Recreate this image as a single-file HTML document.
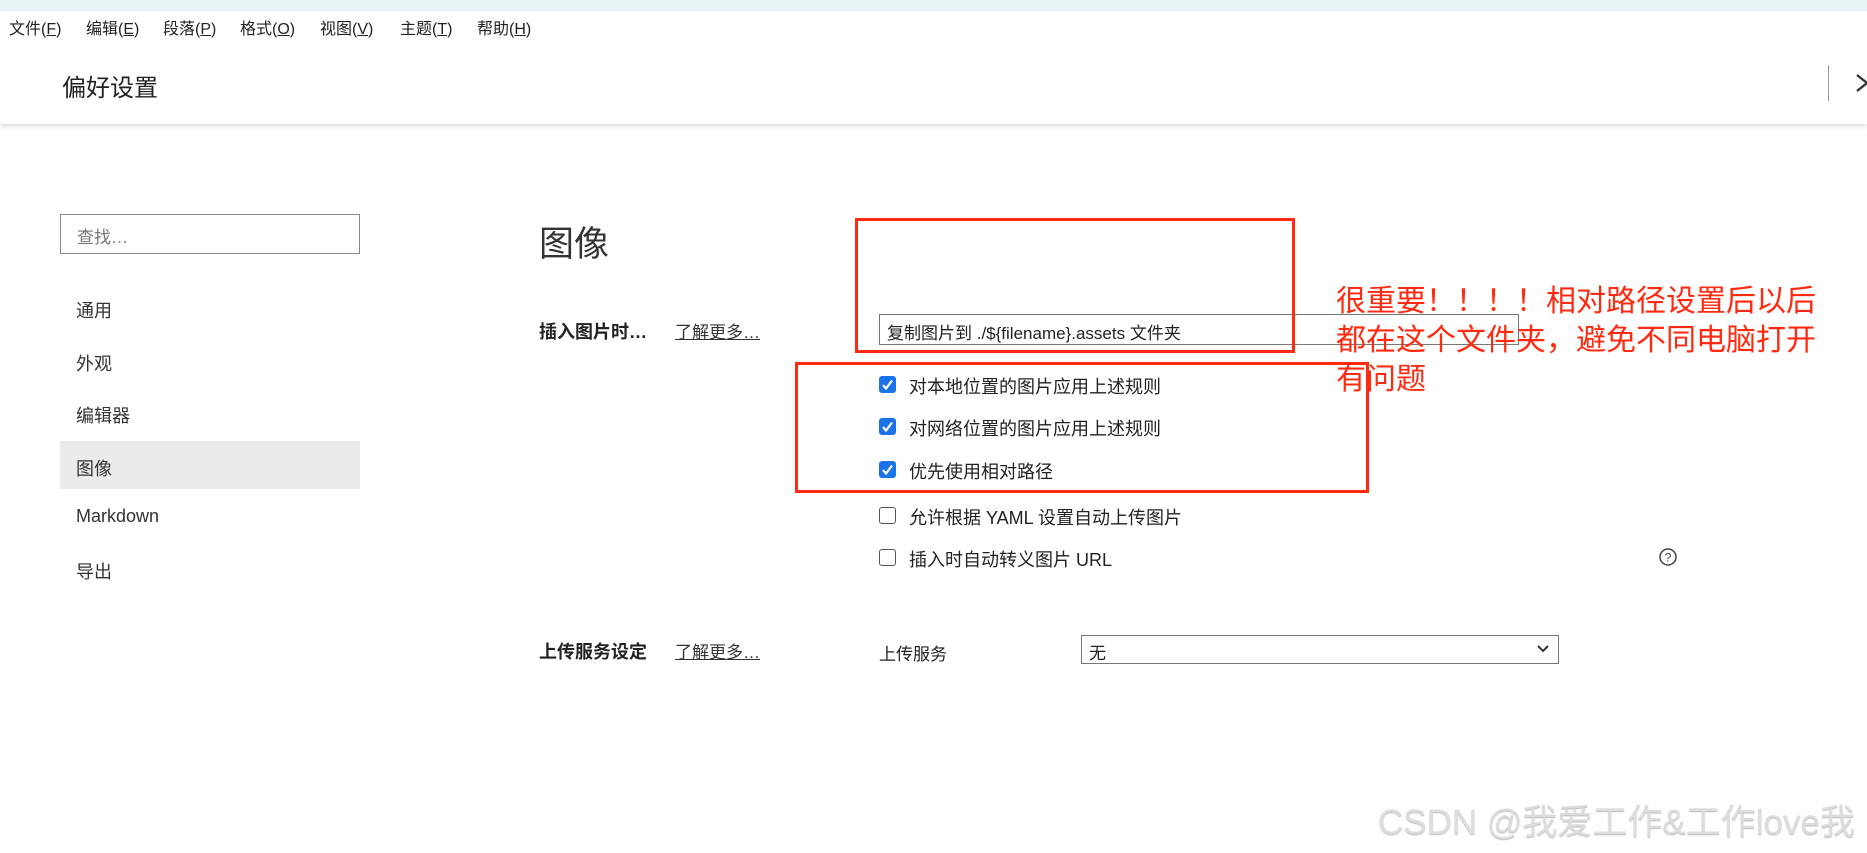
<!DOCTYPE html>
<html><head><meta charset="utf-8"><style>
*{margin:0;padding:0;box-sizing:border-box}
body{width:1867px;height:853px;overflow:hidden;background:#fff;font-family:"Liberation Sans","Noto Sans CJK SC",sans-serif;color:#333;position:relative}
.a{position:absolute;white-space:nowrap}
.top{left:0;top:0;width:1867px;height:11px;background:#e8f5f7}
.menu{left:0;top:11px;width:1867px;height:113px;background:#fff;box-shadow:0 2px 4px rgba(0,0,0,.15)}
.menu span{position:absolute;top:4px;font-size:16px;color:#222}
.side{font-size:18px;color:#333}
.cb{position:absolute;width:17px;height:17px;border-radius:3px}
.on{background:#1a73e8}
.off{border:1.5px solid #555;background:#fff}
.ct{font-size:18px;color:#222}
.red{border:3px solid #ff2a0f}
</style></head><body>
<div class="a top"></div>
<div class="a menu">
<span style="left:9px">文件(<u>F</u>)</span>
<span style="left:86px">编辑(<u>E</u>)</span>
<span style="left:163px">段落(<u>P</u>)</span>
<span style="left:240px">格式(<u>O</u>)</span>
<span style="left:320px">视图(<u>V</u>)</span>
<span style="left:400px">主题(<u>T</u>)</span>
<span style="left:477px">帮助(<u>H</u>)</span>
<span style="left:62px;top:57px;font-size:24px">偏好设置</span>
<div style="position:absolute;left:1828px;top:54px;width:1px;height:36px;background:#999"></div>
<svg style="position:absolute;left:1855px;top:61px" width="14" height="22"><path d="M2 3L12 11L2 19" stroke="#333" stroke-width="2.4" fill="none"/></svg>
</div>
<div class="a" style="left:60px;top:214px;width:300px;height:40px;border:1px solid #888;background:#fff;font-size:17px;color:#777;padding:8px 16px">查找…</div>
<div class="a side" style="left:76px;top:297px">通用</div>
<div class="a side" style="left:76px;top:350px">外观</div>
<div class="a side" style="left:76px;top:402px">编辑器</div>
<div class="a" style="left:60px;top:441px;width:300px;height:48px;background:#ebebeb"></div>
<div class="a side" style="left:76px;top:455px">图像</div>
<div class="a side" style="left:76px;top:506px">Markdown</div>
<div class="a side" style="left:76px;top:558px">导出</div>

<div class="a" style="left:539px;top:216px;font-size:35px;color:#333">图像</div>
<div class="a" style="left:539px;top:318px;font-size:18px;font-weight:bold;color:#222">插入图片时…</div>
<div class="a" style="left:675px;top:318px;font-size:17px;text-decoration:underline;color:#333">了解更多…</div>
<div class="a" style="left:879px;top:314px;width:640px;height:31px;border:1px solid #777;background:#fff;font-size:17px;color:#222;padding:4px 7px">复制图片到 ./${filename}.assets 文件夹</div>

<div class="cb on" style="left:879px;top:376px"></div><svg class="a" style="left:879px;top:376px" width="17" height="17"><path d="M4 9l3 3.5 6-8" stroke="#fff" stroke-width="2.2" fill="none"/></svg>
<div class="a ct" style="left:909px;top:373px">对本地位置的图片应用上述规则</div>
<div class="cb on" style="left:879px;top:418px"></div><svg class="a" style="left:879px;top:418px" width="17" height="17"><path d="M4 9l3 3.5 6-8" stroke="#fff" stroke-width="2.2" fill="none"/></svg>
<div class="a ct" style="left:909px;top:415px">对网络位置的图片应用上述规则</div>
<div class="cb on" style="left:879px;top:461px"></div><svg class="a" style="left:879px;top:461px" width="17" height="17"><path d="M4 9l3 3.5 6-8" stroke="#fff" stroke-width="2.2" fill="none"/></svg>
<div class="a ct" style="left:909px;top:458px">优先使用相对路径</div>
<div class="cb off" style="left:879px;top:507px"></div>
<div class="a ct" style="left:909px;top:504px">允许根据 YAML 设置自动上传图片</div>
<div class="cb off" style="left:879px;top:549px"></div>
<div class="a ct" style="left:909px;top:546px">插入时自动转义图片 URL</div>
<svg class="a" style="left:1658px;top:547px" width="20" height="20"><circle cx="10" cy="10" r="8" stroke="#444" stroke-width="1.5" fill="none"/><text x="10" y="14.5" font-size="12" text-anchor="middle" fill="#444" font-family="Liberation Sans">?</text></svg>

<div class="a" style="left:539px;top:638px;font-size:18px;font-weight:bold;color:#222">上传服务设定</div>
<div class="a" style="left:675px;top:638px;font-size:17px;text-decoration:underline;color:#333">了解更多…</div>
<div class="a" style="left:879px;top:640px;font-size:17px;color:#222">上传服务</div>
<div class="a" style="left:1081px;top:635px;width:478px;height:29px;border:1px solid #777;background:#fff;font-size:17px;color:#222;padding:3px 7px">无</div>
<svg class="a" style="left:1536px;top:643px" width="14" height="12"><path d="M2 3l5 5 5-5" stroke="#333" stroke-width="2" fill="none"/></svg>

<div class="a red" style="left:855px;top:218px;width:440px;height:135px"></div>
<div class="a red" style="left:795px;top:362px;width:574px;height:131px"></div>
<div class="a" style="left:1336px;top:282px;font-size:30px;line-height:39px;color:#ff2a0f;white-space:normal;width:531px">很重要！！！！相对路径设置后以后<br>都在这个文件夹，避免不同电脑打开<br>有问题</div>
<div class="a" style="left:1378px;top:794px;font-size:35px;color:#ddd;text-shadow:0 1px 1px #bbb">CSDN @我爱工作&amp;工作love我</div>
</body></html>
